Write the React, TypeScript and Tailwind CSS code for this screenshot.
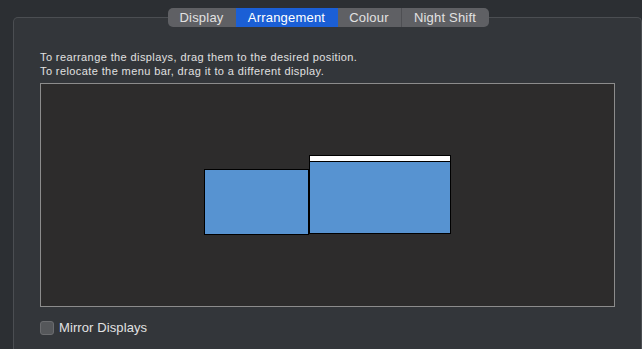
import React from 'react';

const TABS = [
  { label: 'Display', w: 'w-[68px]' },
  { label: 'Arrangement', w: 'w-[102px]' },
  { label: 'Colour', w: 'w-[63px]' },
  { label: 'Night Shift', w: 'w-[88px]' },
];

const font = { fontFamily: '"Liberation Sans", Arial, sans-serif' };

export default function App() {
  return (
    <div className="w-[642px] h-[349px] overflow-hidden bg-[#2c2f33] pl-[13px] pt-[17px]" style={font}>
      <div className="relative h-[340px] rounded-tl-[5px] rounded-tr-[5px] border-l border-t border-r border-[#4b4e52] bg-[#33363a]">
        {/* segmented tabs */}
        <div className="absolute -top-[10px] left-0 right-0 flex justify-center">
          <div className="flex h-[19px] rounded-[5px] overflow-hidden bg-[#5f6064] ml-[1px]">
            {TABS.map((t, i) => {
              const active = t.label === 'Arrangement';
              return (
                <div
                  key={t.label}
                  className={`${t.w} flex items-center justify-center text-[13px] leading-none tracking-[0.2px] ${
                    active ? 'bg-[#1b5fd6] text-white' : 'text-[#e2e2e2]'
                  } ${i === 3 ? 'border-l border-[#4e4f53]' : ''}`}
                >
                  {t.label}
                </div>
              );
            })}
          </div>
        </div>

        <div className="pl-[26px] pt-[32px]">
          <div className="text-[11px] leading-[14px] tracking-[0.4px] text-[#e0e0e0]">
            <div>To rearrange the displays, drag them to the desired position.</div>
            <div>To relocate the menu bar, drag it to a different display.</div>
          </div>

          {/* arrangement canvas */}
          <div className="relative mt-[5px] w-[575px] h-[224px] border border-[#8c8c8c] bg-[#2d2c2c]">
            <div className="absolute left-[163px] top-[85px] w-[105px] h-[66px] border border-black bg-[#5793d1]" />
            <div className="absolute left-[268px] top-[71px] w-[142px] h-[79px] border border-black bg-[#5793d1] flex flex-col">
              <div className="h-[5px] bg-white border-b border-black box-content" />
            </div>
          </div>

          <div className="mt-[11px] flex items-center gap-[5px]">
            <div className="w-[14px] h-[14px] rounded-[3px] border border-[#6b6c6f] bg-[#55575a]" />
            <span className="text-[13px] tracking-[0.1px] text-[#e2e2e2]">Mirror Displays</span>
          </div>
        </div>
      </div>
    </div>
  );
}
